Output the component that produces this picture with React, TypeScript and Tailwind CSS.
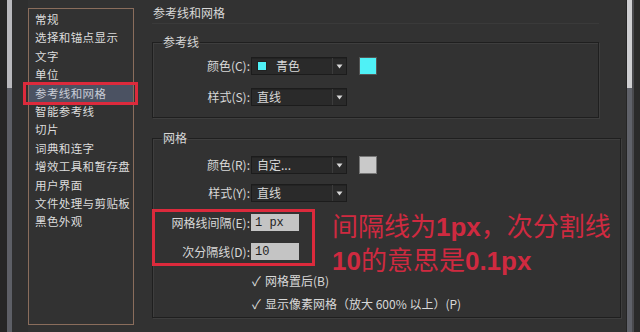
import React from 'react'

const CJK = '"Noto Sans CJK SC", "Noto Sans", sans-serif'

const navItems = [
  '常规',
  '选择和锚点显示',
  '文字',
  '单位',
  '参考线和网格',
  '智能参考线',
  '切片',
  '词典和连字',
  '增效工具和暂存盘',
  '用户界面',
  '文件处理与剪贴板',
  '黑色外观',
]

function Caret() {
  return (
    <svg width="7" height="5" viewBox="0 0 7 5" className="block">
      <path d="M0.5 0.5 H6.5 L3.5 4.5 Z" fill="#d8d8d8" />
    </svg>
  )
}

function Dropdown({ text, swatch }: { text: string; swatch?: string }) {
  return (
    <div className="flex h-[18px] w-[96px] items-center border border-[#1c1c1c] bg-[#2a2a2a] shadow-[inset_0_1px_0_#232323]">
      {swatch && <span className="ml-[5px] h-[10px] w-[10px] border border-[#222]" style={{ background: swatch }} />}
      <span className={swatch ? 'ml-[9px] flex-1 truncate' : 'ml-[5px] flex-1 truncate'}>{text}</span>
      <span className="flex h-full w-[14px] items-center justify-center border-l border-[#3c3c3c]">
        <Caret />
      </span>
    </div>
  )
}

function Row({ label, children }: { label: string; children: React.ReactNode }) {
  return (
    <div className="flex items-center">
      <span className="w-[88px] shrink-0 text-right leading-[18px]">{label}</span>
      <div className="ml-[1px] flex items-center gap-[12px]">{children}</div>
    </div>
  )
}

function Field({ value }: { value: string }) {
  return (
    <div
      className="flex h-[17px] w-[48px] items-center bg-[#c4c4c4] pl-[4px] text-[12px] text-[#1e1e1e]"
      style={{ fontFamily: '"Liberation Mono", monospace' }}
    >
      {value}
    </div>
  )
}

function Group({ title, children, className }: { title: string; children: React.ReactNode; className?: string }) {
  return (
    <fieldset
      className={
        'border border-[#1f1f1f] px-[9px] shadow-[inset_1px_1px_0_#3e3e3e,1px_1px_0_#3e3e3e] ' + (className ?? '')
      }
    >
      <legend className="px-[1px] leading-[14px] text-[#d6d6d6]">{title}</legend>
      {children}
    </fieldset>
  )
}

export default function App() {
  return (
    <div
      className="flex h-[332px] w-[640px] overflow-hidden bg-[#323232] text-[12px] text-[#d8d8d8]"
      style={{ fontFamily: CJK }}
    >
      {/* left edge strip */}
      <div className="w-[7px] shrink-0 bg-[#262626]" />
      <div className="flex w-[5px] shrink-0 flex-col bg-[#5d5f66]">
        <div className="h-[88px] bg-[#b9b9bd]" />
      </div>
      <div className="w-[16px] shrink-0 bg-[#2f2f2f]" />

      {/* category list */}
      <div className="relative mt-[8px] h-[317px] w-[106px] shrink-0 border border-[#8a6d5c] pt-[1px]">
        {navItems.map((item, i) => (
          <div
            key={item}
            className={
              'h-[18.4px] whitespace-nowrap pl-[6px] text-[11.5px] leading-[18.4px] tracking-[0.4px] ' +
              (i === 4 ? 'bg-[#4b5262] text-[#c8ccd6]' : 'text-[#dcdcdc]')
            }
          >
            {item}
          </div>
        ))}
        {/* annotation frame */}
        <div className="absolute left-[-6px] top-[73px] h-[23px] w-[115px] border-[3px] border-[#dc2a3c]" />
      </div>

      {/* main settings */}
      <div className="ml-[18px] flex w-[447px] shrink-0 flex-col">
        <div className="mt-[6px] border-b border-[#3a3a3a] pb-[3px] pl-[1px] leading-[14px]">参考线和网格</div>

        <Group title="参考线" className="mt-[11px] pb-[11px]">
          <div className="mt-[8px] flex flex-col gap-[13px]">
            <Row label="颜色(C):">
              <Dropdown text="青色" swatch="#4ff1f6" />
              <span className="h-[18px] w-[18px] border border-[#555] bg-[#4ff1f6]" />
            </Row>
            <Row label="样式(S):">
              <Dropdown text="直线" />
            </Row>
          </div>
        </Group>

        <Group title="网格" className="mt-[13px] h-[187px]">
          <div className="mt-[11px] flex flex-col gap-[10px]">
            <Row label="颜色(R):">
              <Dropdown text="自定..." />
              <span className="h-[18px] w-[18px] border border-[#777] bg-[#c9c9c9]" />
            </Row>
            <Row label="样式(Y):">
              <Dropdown text="直线" />
            </Row>
          </div>

          <div className="relative mt-[7px] flex items-start">
            <div className="-ml-[10px] flex h-[57px] w-[163px] shrink-0 flex-col gap-[12px] border-[3px] border-[#dc2a3c] pl-[7px] pt-[2px]">
              <div className="flex items-center">
                <span className="w-[88px] shrink-0 text-right leading-[17px]">网格线间隔(E):</span>
                <div className="ml-[1px]">
                  <Field value="1 px" />
                </div>
              </div>
              <div className="flex items-center">
                <span className="w-[88px] shrink-0 text-right leading-[17px]">次分隔线(D):</span>
                <div className="ml-[1px]">
                  <Field value="10" />
                </div>
              </div>
            </div>
            <div className="ml-[17px] text-[26px] leading-[31px] text-[#cf2a40]">
              <div className="whitespace-nowrap">
                间隔线为<span className="font-bold" style={{ fontFamily: '"Liberation Sans", sans-serif' }}>1px</span>，次分割线
              </div>
              <div className="whitespace-nowrap">
                <span className="font-bold" style={{ fontFamily: '"Liberation Sans", sans-serif' }}>10</span>的意思是
                <span className="font-bold" style={{ fontFamily: '"Liberation Sans", sans-serif' }}>0.1px</span>
              </div>
            </div>
          </div>

          <div className="-mt-[5px] ml-[90px] flex flex-col gap-[5px]">
            <div className="flex h-[18px] items-center gap-[3px]">
              <span className="w-[10px] text-[13px]">✓</span>
              <span>网格置后(B)</span>
            </div>
            <div className="flex h-[18px] items-center gap-[3px]">
              <span className="w-[10px] text-[13px]">✓</span>
              <span>显示像素网格（放大 600% 以上）(P)</span>
            </div>
          </div>
        </Group>
      </div>

      <div className="flex-1" />

      {/* right edge strip */}
      <div className="w-[1px] shrink-0 bg-[#262626]" />
      <div className="flex w-[5px] shrink-0 flex-col bg-[#60626a]">
        <div className="h-[88px] bg-[#cfcfd2]" />
      </div>
      <div className="w-[2px] shrink-0 bg-[#4a4a4e]" />
      <div className="w-[6px] shrink-0 bg-[#2a2a2a]" />
    </div>
  )
}
